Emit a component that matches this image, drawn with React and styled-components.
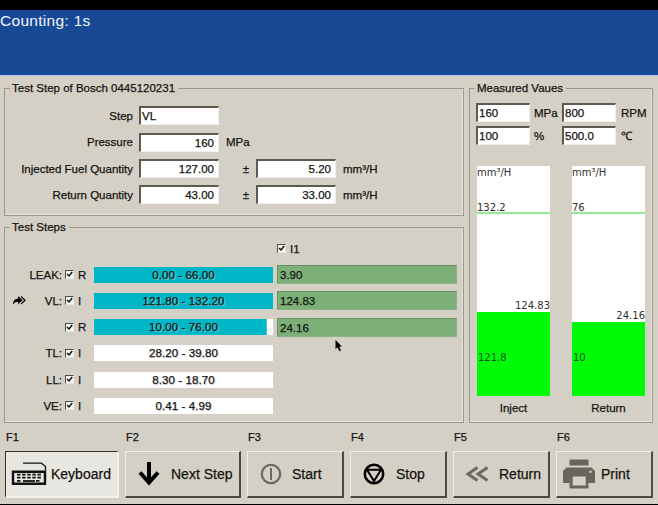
import React from "react";
import styled, { createGlobalStyle } from "styled-components";

const GlobalStyle = createGlobalStyle`
  * {
    box-sizing: border-box;
  }
  body {
    margin: 0;
    background: #d4d0c6;
  }
`;

const Screen = styled.div`
  width: 658px;
  height: 505px;
  overflow: hidden;
  display: flex;
  flex-direction: column;
  background: #d4d0c6;
  border-top: 10px solid #000;
  border-bottom: 1px solid #000;
  color: #14130f;
  font-family: "Liberation Sans", Arial, sans-serif;
  font-size: 11.5px;
  line-height: 14px;
  -webkit-text-stroke: 0.25px currentColor;
`;

const Banner = styled.header`
  height: 66px;
  flex: none;
  padding-top: 1px;
  background: #174995;
  border-bottom: 1px solid #b9cbe6;
  color: #f2f6ff;
  font-size: 15.5px;
  line-height: 19px;
  letter-spacing: 0.3px;
  -webkit-text-stroke: 0;
`;

const Main = styled.main`
  display: flex;
  flex: none;
  gap: 4px;
  height: 347px;
  padding: 5px 0 0 4px;
`;

const Left = styled.div`
  display: flex;
  flex-direction: column;
  gap: 4px;
  width: 461px;
`;

const Group = styled.fieldset`
  flex: none;
  margin: 0;
  padding: 0;
  min-width: 0;
  width: ${(props) => props.$width}px;
  height: ${(props) => props.$height}px;
  border: 1px solid #99968b;
  box-shadow: inset -1px -1px 0 #e6e3db;
`;

const Legend = styled.legend`
  height: 14px;
  margin-left: 5px;
  padding: 0 3px 0 2px;
`;

const Form = styled.div`
  display: grid;
  grid-template-columns: 134px 80px 37px 80px 60px;
  grid-auto-rows: 19px;
  row-gap: 7.4px;
  padding-top: 11.3px;
  align-items: center;
`;

const FieldLabel = styled.label`
  padding-right: 6px;
  text-align: right;
  white-space: nowrap;
`;

const Unit = styled.span`
  padding-left: ${(props) => props.$indent || 7}px;
`;

const PlusMinus = styled.span`
  padding-right: 7px;
  text-align: right;
`;

const Input = styled.div`
  height: 19px;
  padding: 1px 4px 0 1px;
  background: #fff;
  border: 1px solid #f0eee8;
  border-top: 2px solid #5d5a52;
  border-left: 2px solid #5d5a52;
  text-align: ${(props) => (props.$right ? "right" : "left")};
`;

const Steps = styled.div`
  padding-top: 1.5px;
`;

const StepRow = styled.div`
  display: grid;
  grid-template-columns: 22px 38px 9px 20px 179px 4px 180px;
  height: 26.2px;
  align-items: center;
`;

const StepName = styled.span`
  padding-right: 3px;
  text-align: right;
  white-space: nowrap;
`;

const StepKind = styled.span`
  padding-left: 4px;
`;

const Arrow = styled.svg`
  display: block;
  margin-left: 8px;
`;

const Check = styled.span`
  width: 9px;
  height: 9px;
  background: #f6f4ee;
  border: 1px solid #e9e7df;
  border-top-color: #4f4c45;
  border-left-color: #4f4c45;

  svg {
    display: block;
  }
`;

const Range = styled.div`
  height: 16px;
  line-height: 17px;
  text-align: center;
  letter-spacing: 0.1px;
  background: linear-gradient(#00b7c7, #00b7c7) no-repeat #fff;
  background-size: ${(props) => props.$fill}% 100%;
  text-shadow: 1px 1px 0 ${(props) => (props.$fill ? "#70cbd0" : "#ddd")};
`;

const Result = styled.div`
  grid-column: 7;
  height: 19px;
  padding-left: 2px;
  line-height: 18px;
  background: #7db078;
  border: 1px solid #8cb186;
  border-top-color: #698f62;
  border-left-color: #698f62;
`;

const HeaderCell = styled.div`
  grid-column: 7;
  display: flex;
  align-items: center;
  gap: 4px;
`;

const Readings = styled.div`
  display: grid;
  grid-template-columns: 54px 32px 54px 32px;
  row-gap: 4px;
  padding: 8px 0 0 6px;
  align-items: center;
`;

const Gauges = styled.div`
  display: flex;
  gap: 22px;
  padding: 21px 0 0 7px;
`;

const GaugeColumn = styled.div`
  width: 73px;
  text-align: center;
`;

const Gauge = styled.div`
  display: flex;
  flex-direction: column;
  height: 230px;
  margin-bottom: 5px;
  background: #fff;
  color: #30302c;
  font-family: "DejaVu Sans", sans-serif;
  font-size: 10px;
  line-height: 12px;
  text-align: left;
  -webkit-text-stroke: 0;
`;

const GaugeTop = styled.div`
  display: flex;
  flex-direction: column;
  gap: 23px;
  height: 48px;
  padding-top: 1px;
  border-bottom: 2px solid #93ee93;
`;

const GaugeValue = styled.div`
  flex: 1;
  display: flex;
  align-items: flex-end;
  justify-content: flex-end;
`;

const GaugeFill = styled.div`
  height: ${(props) => props.$level}px;
  display: flex;
  align-items: flex-end;
  padding: 0 0 32px 1px;
  background: #00fb08;
  color: #0e5212;
`;

const Toolbar = styled.footer`
  display: flex;
  gap: 6px;
  padding: 7px 0 0 5px;
`;

const Key = styled.div`
  width: ${(props) => props.$width}px;
  padding-left: 1px;
  font-size: 11px;
`;

const Button = styled.button`
  display: flex;
  align-items: center;
  width: ${(props) => props.$width}px;
  height: 47px;
  margin: 7px 0 0 -1px;
  padding: 0;
  background: ${(props) =>
    props.$pressed
      ? "repeating-conic-gradient(#e4e3dc 0 25%, #ebeae4 0 50%) 0 0 / 2px 2px"
      : "#d4d0c6"};
  border: 2px solid;
  border-color: ${(props) =>
    props.$pressed
      ? "#34322d #f3f1e9 #f3f1e9 #34322d"
      : "#f1efe6 #4b4a42 #4b4a42 #f1efe6"};
  border-top-width: 1px;
  border-left-width: 1px;
  color: #14130f;
  font: 14px/18px "Liberation Sans", Arial, sans-serif;

  svg {
    flex: none;
    margin-left: ${(props) => props.$icon}px;
    margin-right: ${(props) => props.$gap}px;
  }
`;

const Pointer = styled.svg`
  position: absolute;
  left: 335px;
  top: 340px;
`;

const CheckBox = () => (
  <Check>
    <svg width="7" height="7" viewBox="0 0 7 7">
      <path d="M1 3l2 2 3.2-4" fill="none" stroke="#111" strokeWidth="1.5" />
    </svg>
  </Check>
);

const KeyboardIcon = () => (
  <svg width="36" height="24" viewBox="0 0 36 24">
    <path d="M12 1.2h18.500l4 3.300v4" fill="none" stroke="#111" strokeWidth="1.300" />
    <path
      d="M2 9.700h32v12H2z"
      fill="#e7e6df"
      stroke="#111"
      strokeWidth="2.400"
    />
    <path
      d="M6 12.700h24M6 15.700h24M6 18.900h4M25 18.900h5"
      stroke="#111"
      strokeWidth="1.700"
      strokeDasharray="3.500 1.600"
    />
    <path d="M12 19h12" stroke="#111" strokeWidth="1.800" />
  </svg>
);

const DownIcon = () => (
  <svg width="22" height="24" viewBox="0 0 22 24">
    <path
      d="M11 0v21M2 10.500l9 10 9-10"
      fill="none"
      stroke="#000"
      strokeWidth="4"
    />
  </svg>
);

const StartIcon = () => (
  <svg width="22" height="22" viewBox="0 0 22 22">
    <circle cx="11" cy="11" r="9.200" fill="none" stroke="#6c6b60" strokeWidth="2.300" />
    <path d="M11 5v12" stroke="#6c6b60" strokeWidth="2" />
  </svg>
);

const StopIcon = () => (
  <svg width="22" height="22" viewBox="0 0 22 22">
    <circle cx="11" cy="11" r="9.200" fill="none" stroke="#000" strokeWidth="2.500" />
    <path d="M4 6.800h14L11 18z" fill="none" stroke="#000" strokeWidth="2" />
  </svg>
);

const ReturnIcon = () => (
  <svg width="24" height="16" viewBox="0 0 24 16">
    <path
      d="M12.500 1.500L3 8l9.500 6.500M22.500 1.500L13 8l9.500 6.500"
      fill="none"
      stroke="#6c6b60"
      strokeWidth="3"
    />
  </svg>
);

const PrintIcon = () => (
  <svg width="32" height="30" viewBox="0 0 32 30">
    <path d="M6.500 .5h19v6h-19z" fill="#66665b" />
    <path
      d="M3.500 8.500h25L32 12v12h-6.500v5.500h-19V24H0V12z"
      fill="#66665b"
    />
    <path d="M9.700 17.500h13v9h-13z" fill="#d4d0c6" />
    <circle cx="27.500" cy="12.700" r="1.300" fill="#d4d0c6" />
  </svg>
);

const steps = [
  { name: "LEAK:", kind: "R", range: "0.00 - 66.00", fill: 100, result: "3.90" },
  {
    name: "VL:",
    kind: "I",
    range: "121.80 - 132.20",
    fill: 100,
    result: "124.83",
    active: true,
  },
  { name: "", kind: "R", range: "10.00 - 76.00", fill: 96.5, result: "24.16" },
  { name: "TL:", kind: "I", range: "28.20 - 39.80", fill: 0 },
  { name: "LL:", kind: "I", range: "8.30 - 18.70", fill: 0 },
  { name: "VE:", kind: "I", range: "0.41 - 4.99", fill: 0 },
];

const gauges = [
  { name: "Inject", max: "132.2", min: "121.8", value: "124.83", level: 84 },
  { name: "Return", max: "76", min: "10", value: "24.16", level: 74 },
];

const buttons = [
  { id: "F1", text: "Keyboard", Icon: KeyboardIcon, width: 114, icon: 5, gap: 4, pressed: true },
  { id: "F2", text: "Next Step", Icon: DownIcon, width: 116, icon: 12, gap: 11 },
  { id: "F3", text: "Start", Icon: StartIcon, width: 97, icon: 12, gap: 10 },
  { id: "F4", text: "Stop", Icon: StopIcon, width: 97, icon: 12, gap: 11 },
  { id: "F5", text: "Return", Icon: ReturnIcon, width: 97, icon: 11, gap: 10 },
  { id: "F6", text: "Print", Icon: PrintIcon, width: 97, icon: 6, gap: 6 },
];

const App = () => {
  const renderSteps = () => {
    return steps.map((step) => {
      const { name, kind, range, fill, result, active } = step;
      return (
        <StepRow key={range}>
          <span>
            {active && (
              <Arrow width="13" height="9" viewBox="0 0 13 9">
                <path
                  d="M0 8.500C0 4.500 2 2.800 5 2.700V0l4.500 4.300L5 8.300V5.800C3 5.600 1.500 6.500 0 8.500z"
                  fill="#000"
                />
                <path d="M8 .5l4 3.800-4 3.700" fill="none" stroke="#000" strokeWidth="1.200" />
              </Arrow>
            )}
          </span>
          <StepName>{name}</StepName>
          <CheckBox />
          <StepKind>{kind}</StepKind>
          <Range $fill={fill}>{range}</Range>
          {result && <Result>{result}</Result>}
        </StepRow>
      );
    });
  };

  return (
    <>
      <GlobalStyle />
      <Screen>
        <Banner>Counting: 1s</Banner>
        <Main>
          <Left>
            <Group $width={460} $height={135}>
              <Legend>Test Step of Bosch 0445120231</Legend>
              <Form>
                <FieldLabel>Step</FieldLabel>
                <Input>VL</Input>
                <span />
                <span />
                <span />
                <FieldLabel>Pressure</FieldLabel>
                <Input $right>160</Input>
                <Unit>MPa</Unit>
                <span />
                <span />
                <FieldLabel>Injected Fuel Quantity</FieldLabel>
                <Input $right>127.00</Input>
                <PlusMinus>±</PlusMinus>
                <Input $right>5.20</Input>
                <Unit>mm³/H</Unit>
                <FieldLabel>Return Quantity</FieldLabel>
                <Input $right>43.00</Input>
                <PlusMinus>±</PlusMinus>
                <Input $right>33.00</Input>
                <Unit>mm³/H</Unit>
              </Form>
            </Group>
            <Group $width={460} $height={203}>
              <Legend>Test Steps</Legend>
              <Steps>
                <StepRow>
                  <HeaderCell>
                    <CheckBox />
                    I1
                  </HeaderCell>
                </StepRow>
                {renderSteps()}
              </Steps>
            </Group>
          </Left>
          <Group $width={184} $height={342}>
            <Legend>Measured Vaues</Legend>
            <Readings>
              <Input>160</Input>
              <Unit $indent={4}>MPa</Unit>
              <Input>800</Input>
              <Unit $indent={5}>RPM</Unit>
              <Input>100</Input>
              <Unit $indent={4}>%</Unit>
              <Input>500.0</Input>
              <Unit $indent={5}>℃</Unit>
            </Readings>
            <Gauges>
              {gauges.map(({ name, max, min, value, level }) => (
                <GaugeColumn key={name}>
                  <Gauge>
                    <GaugeTop>
                      <span>mm³/H</span>
                      <span>{max}</span>
                    </GaugeTop>
                    <GaugeValue>{value}</GaugeValue>
                    <GaugeFill $level={level}>{min}</GaugeFill>
                  </Gauge>
                  {name}
                </GaugeColumn>
              ))}
            </Gauges>
          </Group>
        </Main>
        <Toolbar>
          {buttons.map(({ id, text, Icon, width, icon, gap, pressed }) => (
            <Key key={id} $width={width}>
              {id}
              <Button $width={width} $icon={icon} $gap={gap} $pressed={pressed}>
                <Icon />
                {text}
              </Button>
            </Key>
          ))}
        </Toolbar>
        <Pointer width="8" height="12" viewBox="0 0 8 12">
          <path d="M.5 0v9l2-1.800 1.800 4 1.700-.8-1.800-3.800H7z" fill="#000" />
        </Pointer>
      </Screen>
    </>
  );
};

export default App;
